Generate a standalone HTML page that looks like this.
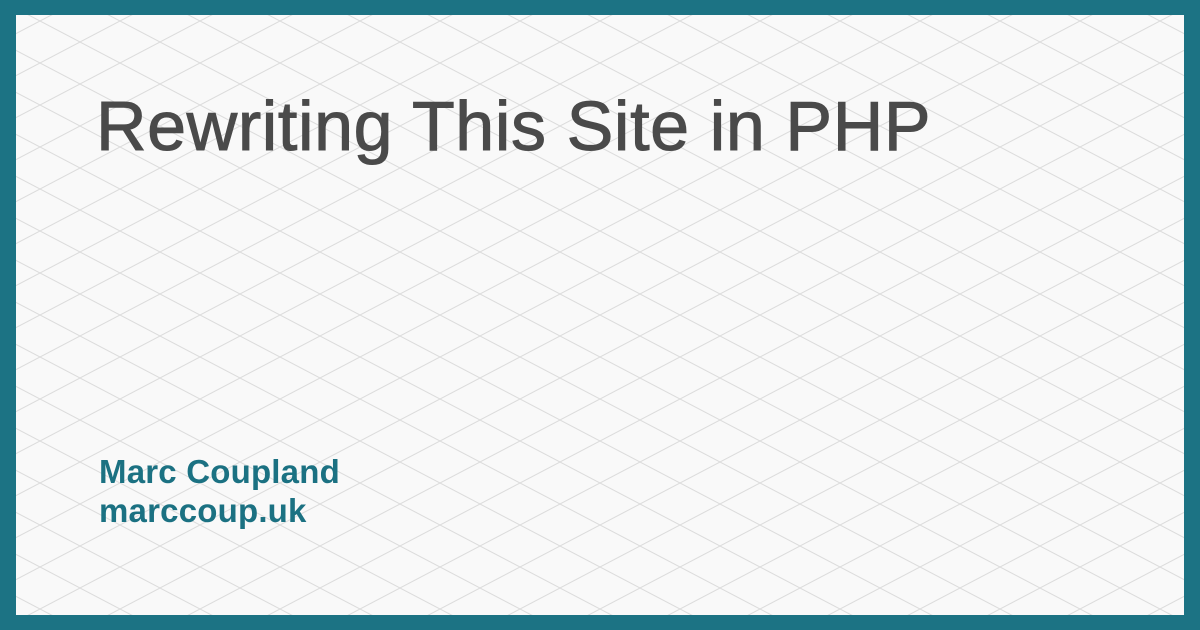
<!DOCTYPE html>
<html><head><style>
html,body{margin:0;padding:0}
body{width:1200px;height:630px;background:#1c7384;position:relative;overflow:hidden;font-family:"Liberation Sans",sans-serif}
.inner{position:absolute;left:16px;top:15px;width:1168px;height:600px;background:#f9f9f9;overflow:hidden}
svg{position:absolute;left:0;top:0}
h1{position:absolute;left:80px;top:71px;margin:0;font-size:70px;line-height:80px;font-weight:normal;color:#4a4a4a;letter-spacing:0.6px;white-space:nowrap;-webkit-text-stroke:1px #4a4a4a}
.a{position:absolute;left:83px;top:437px;font-size:33px;font-weight:bold;color:#1b7182;line-height:39px;letter-spacing:0.2px}
</style></head><body>
<div class="inner">
<svg width="1168" height="600"><defs><pattern id="p" width="80" height="42" patternUnits="userSpaceOnUse" x="-16" y="-15"><path d="M0 0L80 42M80 0L0 42" stroke="#dcdcdc" stroke-width="1" fill="none"/></pattern></defs><rect width="1168" height="600" fill="url(#p)"/></svg>
<h1>Rewriting This Site in PHP</h1>
<div class="a">Marc Coupland<br>marccoup.uk</div>
</div>
</body></html>
